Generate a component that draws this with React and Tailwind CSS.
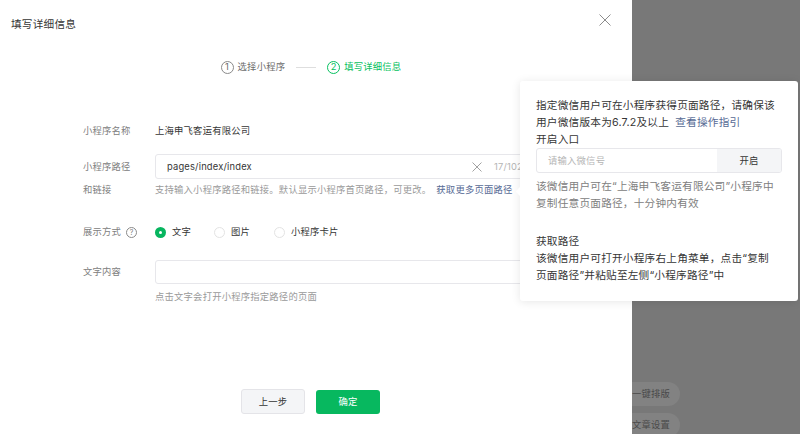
import React from "react";

const font = { fontFamily: '"Inter","Noto Sans CJK SC",sans-serif' };

function Radio({ checked, label, className = "" }) {
  return (
    <label className={`flex items-center gap-[6px] ${className}`}>
      {checked ? (
        <span className="flex h-[11px] w-[11px] items-center justify-center rounded-full bg-[#07b55f]">
          <span className="h-[3px] w-[3px] rounded-full bg-white" />
        </span>
      ) : (
        <span className="h-[11px] w-[11px] rounded-full border border-[#e3e3e3]" />
      )}
      <span className="text-[#353535]">{label}</span>
    </label>
  );
}

function Step({ n, label, active }) {
  return (
    <div className={`flex items-center gap-[4px] ${active ? "text-[#07c160]" : "text-[#6d6d6d]"}`}>
      <span className={`flex h-[13px] w-[13px] items-center justify-center rounded-full border text-[9.33px] leading-none ${active ? "border-[#07c160]" : "border-[#8a8a8a]"}`}>{n}</span>
      <span>{label}</span>
    </div>
  );
}

function Row({ label, children, className = "", labelClass = "" }) {
  return (
    <div className={`flex ${className}`}>
      <div className={`w-[72px] shrink-0 text-[#808080] ${labelClass}`}>{label}</div>
      <div className="min-w-0 flex-1">{children}</div>
    </div>
  );
}

export default function App() {
  return (
    <div style={font} className="relative flex h-[434px] w-[800px] overflow-hidden bg-[#787878] text-[9.33px] leading-[16px] tracking-[0.2px]">
      <main className="z-10 flex h-full w-[632px] shrink-0 flex-col bg-white">
        <header className="flex h-[50px] items-center justify-between pl-[11px] pr-[21px]">
          <h1 className="text-[10.67px] text-[#353535]">填写详细信息</h1>
          <svg width="12" height="12" viewBox="0 0 12 12" fill="none" stroke="#7f7f7f" strokeWidth="0.9" className="-mt-[11px]"><path d="M0.5 0.5 11.5 11.5M11.5 0.5 0.5 11.5" /></svg>
        </header>
        <div className="mt-[9px] flex items-center justify-center gap-[11px] pr-[10px]">
          <Step n="1" label="选择小程序" />
          <span className="h-px w-[20px] bg-[#dedede]" />
          <Step n="2" label="填写详细信息" active />
        </div>
        <section className="ml-[83px] mt-[48px] flex flex-1 flex-col">
          <Row label="小程序名称">
            <span className="text-[#353535]">上海申飞客运有限公司</span>
          </Row>
          <Row label="小程序路径" className="mt-[15px]" labelClass="pt-[5px]">
            <div className="flex h-[25px] w-[385px] items-center whitespace-nowrap rounded-[3px] border border-[#e7e7eb] pl-[11px] text-[#353535]">
              <span className="flex-1">pages/index/index</span>
              <svg width="10" height="10" viewBox="0 0 10 10" fill="none" stroke="#8a8a8a" strokeWidth="0.8" className="mr-[12px]"><path d="M0.5 0.5 9.5 9.5M9.5 0.5 0.5 9.5" /></svg>
              <span className="w-[45px] text-[#b5b5b5]">17/1024</span>
            </div>
          </Row>
          <Row label="和链接" className="mt-[3px]">
            <p className="whitespace-nowrap text-[#9a9a9a]">
              支持输入小程序路径和链接。默认显示小程序首页路径，可更改。
              <a className="ml-[5px] text-[#576b95]">获取更多页面路径</a>
            </p>
          </Row>
          <Row label={<span className="flex items-center gap-[5px]">展示方式<span className="flex h-[11px] w-[11px] items-center justify-center rounded-full border border-[#8a8a8a] text-[7px] leading-none">?</span></span>} className="mt-[26px]">
            <div className="flex">
              <Radio checked label="文字" className="w-[59px]" />
              <Radio label="图片" className="w-[60px]" />
              <Radio label="小程序卡片" />
            </div>
          </Row>
          <Row label="文字内容" className="mt-[20px]" labelClass="pt-[4px]">
            <div className="h-[24px] rounded-[3px] border border-[#e7e7eb]" />
            <p className="mt-[5px] text-[#9a9a9a]">点击文字会打开小程序指定路径的页面</p>
          </Row>
        </section>
        <footer className="mb-[20px] ml-[241px] flex items-center gap-[11px]">
          <button className="h-[25px] w-[64px] rounded-[3px] border border-[#e4e4e8] bg-[#f4f5f7] text-[#353535]">上一步</button>
          <button className="h-[24px] w-[64px] rounded-[3px] bg-[#07b85f] text-white">确定</button>
        </footer>
      </main>
      <aside className="flex flex-1 flex-col items-start justify-end gap-[7px]">
        <span className="-ml-[20px] h-[24px] w-[68px] rounded-full bg-[#828282] pl-[20px] leading-[24px] text-[#4a4a4a]">一键排版</span>
        <span className="-mb-[3px] -ml-[20px] h-[24px] w-[68px] rounded-full bg-[#828282] pl-[20px] leading-[24px] text-[#4a4a4a]">文章设置</span>
      </aside>
      <div className="absolute left-[520px] top-[81px] z-20 h-[220px] w-[278px] rounded-[3px] bg-white p-[16px] text-[10.67px] leading-[17px] text-[#353535] shadow-[0_1px_10px_rgba(0,0,0,0.1)]">
        <span className="absolute -left-[3px] top-[107px] h-[7px] w-[7px] rotate-45 bg-white" />
        <p className="whitespace-nowrap">指定微信用户可在小程序获得页面路径，请确保该</p>
        <p className="whitespace-nowrap">用户微信版本为6.7.2及以上 <a className="ml-[3px] text-[#576b95]">查看操作指引</a></p>
        <p>开启入口</p>
        <div className="flex h-[25px] w-[246px] overflow-hidden rounded-[3px] border border-[#e7e7eb] text-[9.33px]">
          <span className="flex-1 pl-[11px] leading-[23px] text-[#b5b5b5]">请输入微信号</span>
          <span className="w-[64px] bg-[#f4f5f7] text-center leading-[23px]">开启</span>
        </div>
        <p className="mt-[5px] text-[#808080]">该微信用户可在“上海申飞客运有限公司”小程序中<br />复制任意页面路径，十分钟内有效</p>
        <p className="mt-[21px]">获取路径</p>
        <p>该微信用户可打开小程序右上角菜单，点击“复制<br />页面路径”并粘贴至左侧“小程序路径”中</p>
      </div>
    </div>
  );
}
